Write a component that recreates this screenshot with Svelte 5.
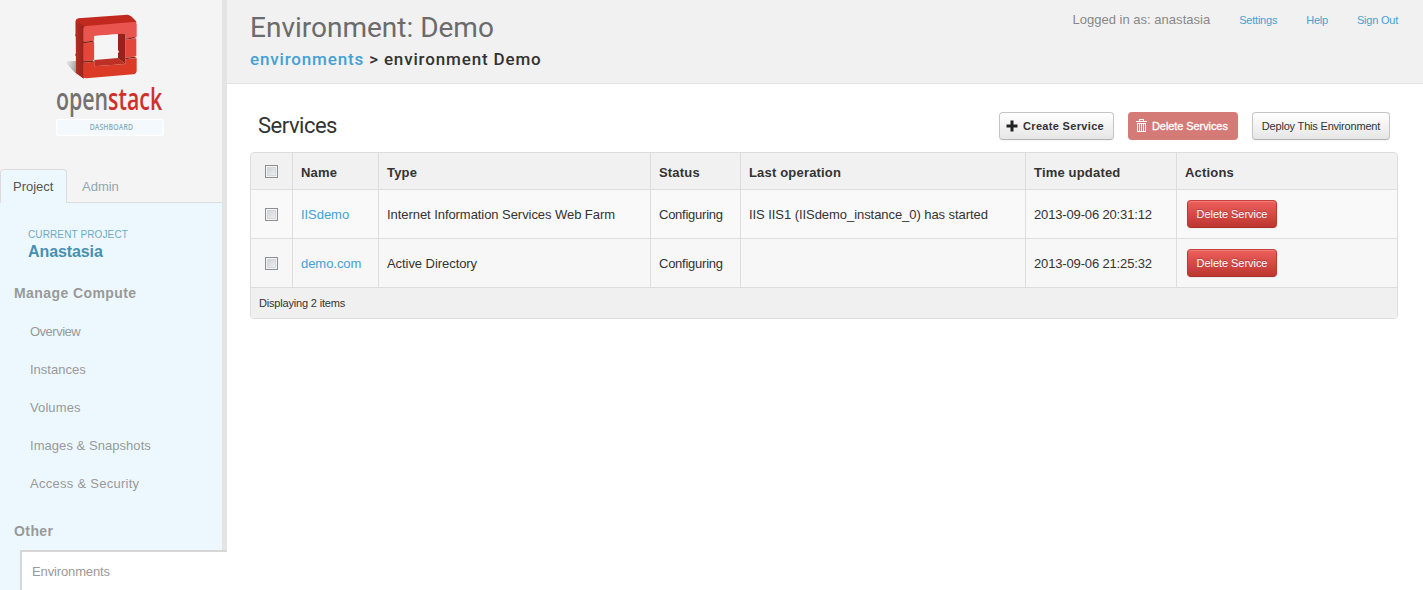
<script>
  const compute = [
    { label: 'Overview', spacing: -0.5 },
    { label: 'Instances', spacing: 0 },
    { label: 'Volumes', spacing: 0.1 },
    { label: 'Images & Snapshots', spacing: 0.05 },
    { label: 'Access & Security', spacing: 0.27 }
  ];
  const columns = [
    { label: 'Name', width: 86 },
    { label: 'Type', width: 272 },
    { label: 'Status', width: 90 },
    { label: 'Last operation', width: 285 },
    { label: 'Time updated', width: 151 },
    { label: 'Actions', width: 220 }
  ];
  const services = [
    { name: 'IISdemo', type: 'Internet Information Services Web Farm', status: 'Configuring', last: 'IIS IIS1 (IISdemo_instance_0) has started', time: '2013-09-06 20:31:12' },
    { name: 'demo.com', type: 'Active Directory', status: 'Configuring', last: '', time: '2013-09-06 21:25:32' }
  ];
</script>

<div class="page">
  <aside class="sidebar">
    <svg class="logo" viewBox="0 0 420 435" width="140" height="145" role="img" aria-label="openstack dashboard">
      <defs>
        <linearGradient id="shade" x1="0" x2="1" y1="0" y2="0.3">
          <stop offset="0" stop-color="#999" stop-opacity="0.15" />
          <stop offset="1" stop-color="#444" stop-opacity="0.85" />
        </linearGradient>
        <linearGradient id="side" x1="0" x2="1" y1="0" y2="0">
          <stop offset="0" stop-color="#b52f25" />
          <stop offset="1" stop-color="#98231b" />
        </linearGradient>
      </defs>
      <path d="M80 184L108 183V222L130 236Q108 226 80 190Z" fill="url(#shade)" />
      <path d="M107 64Q107 57 115 55L262 44Q272 44 287 62L290 68L133 82L131 235L108 218Z" fill="#c1291f" />
      <path d="M107 62L131 78V236L108 219V169L105 165L108 160V110L105 106L107 101Z" fill="url(#side)" />
      <path d="M130 86Q131 79 139 78L279 66Q289 65 290 73V111L256 116V101L163 108V122L130 125Z" fill="#e9544f" />
      <path d="M130 129L163 126V180L130 184Z" fill="#e3473b" />
      <path d="M256 119L289 115V169L256 174Z" fill="#e3473b" />
      <path d="M130 188L163 185V199L256 192V178L290 174V213Q289 222 280 223L139 235Q131 236 130 228Z" fill="#db3b26" />
      <path d="M130 125L157 122L163 126L130 130ZM256 116L282 111L289 114L256 119ZM130 184L157 181L163 185L130 188ZM256 174L282 170L290 173L256 178Z" fill="#8d1f18" />
      <path d="M163 108L234 102V174L163 180Z" fill="#f5f5f5" />
      <path d="M234 102L256 101V192L234 175V158L238 156L234 151Z" fill="#982119" />
      <path d="M163 180L234 174L256 192L163 199Z" fill="#bd3026" />
      <text transform="translate(48 329) scale(0.703 1.02)" font-size="91" font-weight="600" fill="#727272">open<tspan fill="#d0302c">stack</tspan></text>
      <rect x="50" y="358" width="319" height="48" rx="6" fill="#f3f9fc" stroke="#fff" stroke-width="4" />
      <text transform="translate(149 391) scale(0.79 1)" font-size="26" font-weight="600" letter-spacing="0.5" fill="#8baebc">DASHBOARD</text>
    </svg>

    <div class="tabs">
      <span class="tab active">Project</span>
      <span class="tab">Admin</span>
    </div>

    <div class="current">
      <div class="caption">CURRENT PROJECT</div>
      <div class="project">Anastasia</div>
    </div>

    <h4>Manage Compute</h4>
    <ul>
      {#each compute as item}
        <li style="letter-spacing: {item.spacing}px">{item.label}</li>
      {/each}
    </ul>
    <h4 class="other">Other</h4>
    <div class="selected">Environments</div>
  </aside>

  <main>
    <header>
      <div>
        <h1>Environment: Demo</h1>
        <div class="crumbs"><a href="#environments">environments</a> <span>&gt; environment Demo</span></div>
      </div>
      <nav>
        <span class="user">Logged in as: anastasia</span>
        <a href="#settings">Settings</a>
        <a href="#help">Help</a>
        <a href="#signout">Sign Out</a>
      </nav>
    </header>

    <section>
      <div class="toolbar">
        <h3>Services</h3>
        <div class="buttons">
          <button class="btn create">
            <svg width="12" height="12" viewBox="0 0 12 12"><path d="M4.5 0.5h3v4h4v3h-4v4h-3v-4h-4v-3h4z" fill="#222" /></svg>
            Create Service
          </button>
          <button class="btn multi">
            <svg width="11" height="13" viewBox="0 0 11 13">
              <path d="M3 0h5v2h3v1H0V2h3zM4 1v1h3V1zM1 4h9v9H1zM2 5v7h1V5zM4 5v7h1V5zM6 5v7h1V5zM8 5v7h1V5z" fill="#fff" fill-rule="evenodd" />
            </svg>
            Delete Services
          </button>
          <button class="btn deploy">Deploy This Environment</button>
        </div>
      </div>

      <table>
        <colgroup>
          <col style="width: 42px" />
          {#each columns as c}<col style="width: {c.width}px" />{/each}
        </colgroup>
        <thead>
          <tr>
            <th class="pick"><i class="check"></i></th>
            {#each columns as c}<th>{c.label}</th>{/each}
          </tr>
        </thead>
        <tbody>
          {#each services as s}
            <tr>
              <td class="pick"><i class="check"></i></td>
              <td><a class="name" href="#service">{s.name}</a></td>
              <td class="type">{s.type}</td>
              <td class="status">{s.status}</td>
              <td class="last">{s.last}</td>
              <td class="time">{s.time}</td>
              <td class="act"><button class="btn danger">Delete Service</button></td>
            </tr>
          {/each}
        </tbody>
        <tfoot>
          <tr><td colspan="7">Displaying 2 items</td></tr>
        </tfoot>
      </table>
    </section>
  </main>
</div>

<style>
  :global(body) { margin: 0; background: #fff; overflow: hidden; }
  .page {
    display: flex;
    width: 1423px;
    height: 590px;
    overflow: hidden;
    font: 13px/18px "Liberation Sans", Arial, sans-serif;
    color: #333;
  }
  a { color: #43a1d6; text-decoration: none; }
  h1, h3, h4, ul { margin: 0; padding: 0; font-weight: normal; }

  .sidebar {
    box-sizing: border-box;
    flex: none;
    width: 227px;
    height: 590px;
    border-right: 5px solid #e4e4e4;
    background: linear-gradient(#f4f4f4 203px, #edf8fe 203px);
  }
  .logo { display: block; margin-left: 40px; font-family: "Open Sans", sans-serif; }
  .tabs {
    display: flex;
    box-sizing: border-box;
    height: 34px;
    margin-top: 24px;
    box-shadow: inset 0 -1px #dcdcdc;
  }
  .tab {
    box-sizing: border-box;
    height: 34px;
    padding: 9px 15px 0;
    line-height: 18px;
    color: #92a6af;
  }
  .tab.active {
    width: 67px;
    padding: 8px 0 0 12px;
    border: 1px solid #dcdcdc;
    border-bottom: 0;
    border-radius: 4px 4px 0 0;
    background: #edf8fe;
    color: #555;
  }
  .current { padding: 25px 0 0 28px; }
  .caption { height: 14px; font-size: 10px; line-height: 14px; color: #6fa9c6; letter-spacing: 0.12px; }
  .project { font-size: 16px; line-height: 20px; font-weight: bold; color: #4790b1; letter-spacing: -0.1px; }
  h4 { padding: 21px 0 0 14px; font-size: 14px; line-height: 20px; height: 20px; font-weight: bold; color: #999; letter-spacing: 0.42px; }
  ul { list-style: none; padding-top: 9px; }
  li { box-sizing: border-box; height: 38px; padding: 1px 0 0 30px; line-height: 38px; color: #999; }
  h4.other { padding-top: 19px; }
  .selected {
    box-sizing: border-box;
    width: 207px;
    height: 42px;
    margin: 9px 0 0 20px;
    border: solid #d6d6d6;
    border-width: 2px 0 0 2px;
    padding: 1px 0 0 10px;
    background: #fff;
    line-height: 38px;
    position: relative;
    color: #999;
    letter-spacing: -0.13px;
  }

  main { flex: 1; min-width: 0; }
  header {
    display: flex;
    justify-content: space-between;
    box-sizing: border-box;
    height: 84px;
    padding: 0 25px 0 23px;
    border-bottom: 1px solid #e2e2e2;
    background: #f1f1f1;
  }
  h1 { padding-top: 10px; font: 400 28px/36px Roboto, sans-serif; color: #6b6b6b; letter-spacing: 0; }
  .crumbs { padding-top: 3px; font: 500 17px/20px Roboto, sans-serif; color: #333; letter-spacing: 0.84px; white-space: nowrap; }
  nav { display: flex; height: 20px; padding-top: 10px; line-height: 20px; }
  nav a { margin-left: 29px; font-size: 11px; line-height: 21px; letter-spacing: -0.22px; }
  .user { color: #888; letter-spacing: 0.02px; }

  section { padding: 28px 25px 0 23px; }
  .toolbar { display: flex; justify-content: space-between; height: 40px; padding: 0 8px; }
  h3 { font: 400 22px/27px Roboto, sans-serif; color: #333; letter-spacing: -0.5px; }
  .buttons { display: flex; gap: 14px; }
  .btn {
    display: flex;
    align-items: center;
    justify-content: center;
    box-sizing: border-box;
    height: 28px;
    padding: 0;
    border: 1px solid #c5c5c5;
    border-bottom-color: #b3b3b3;
    border-radius: 4px;
    background: linear-gradient(#fff, #e6e6e6);
    box-shadow: inset 0 1px rgba(255, 255, 255, 0.2), 0 1px 2px rgba(0, 0, 0, 0.05);
    font: 11px/16px "Liberation Sans", Arial, sans-serif;
    color: #333;
    white-space: nowrap;
  }
  .create { width: 115px; justify-content: flex-start; padding-left: 6px; gap: 5px; font-weight: bold; letter-spacing: 0.33px; }
  .multi { width: 110px; justify-content: flex-start; padding: 0 0 1px 8px; gap: 5px; border: 0; background: #d47b77; box-shadow: none; color: #fff; -webkit-text-stroke: 0.3px #fff; letter-spacing: -0.08px; }
  .deploy { width: 138px; letter-spacing: -0.19px; }
  .danger {
    width: 90px;
    border-color: #c8403b #bd362f #a92f29;
    background: linear-gradient(#ee5f5b, #bd362f);
    color: #fff;
    text-shadow: 0 -1px rgba(0, 0, 0, 0.25);
    letter-spacing: -0.05px;
  }

  table {
    width: 1148px;
    table-layout: fixed;
    border: 1px solid #ddd;
    border-radius: 4px;
    border-spacing: 0;
    overflow: hidden;
    background: #f9f9f9;
  }
  th, td {
    box-sizing: border-box;
    padding: 0 8px;
    border: solid #ddd;
    border-width: 0 1px 1px 0;
    text-align: left;
    white-space: nowrap;
  }
  th { height: 37px; padding-top: 3px; background: #f1f1f1; letter-spacing: 0.18px; }
  td { height: 49px; padding-top: 2px; }
  th:last-child, td:last-child { border-right: 0; }
  tr:nth-child(2) td { background: #f7f7f7; }
  tfoot td { height: 30px; padding-top: 0; border: 0; background: #f0f0f0; font-size: 11px; letter-spacing: -0.18px; }
  .name { letter-spacing: -0.05px; }
  .type, .last { letter-spacing: -0.06px; }
  .status { letter-spacing: -0.25px; }
  .time { letter-spacing: -0.15px; }
  td.act { padding: 0 0 0 10px; }
  th.pick, td.pick { padding: 0 0 0 14px; }
  .check {
    display: block;
    box-sizing: border-box;
    width: 13px;
    height: 13px;
    border: 1px solid #8c8f92;
    background: linear-gradient(135deg, #c8ccd2, #f6f6f6) padding-box;
    box-shadow: inset 0 0 0 1px #f4f4f4, inset 0 0 0 2px #d4d7db;
  }
</style>
